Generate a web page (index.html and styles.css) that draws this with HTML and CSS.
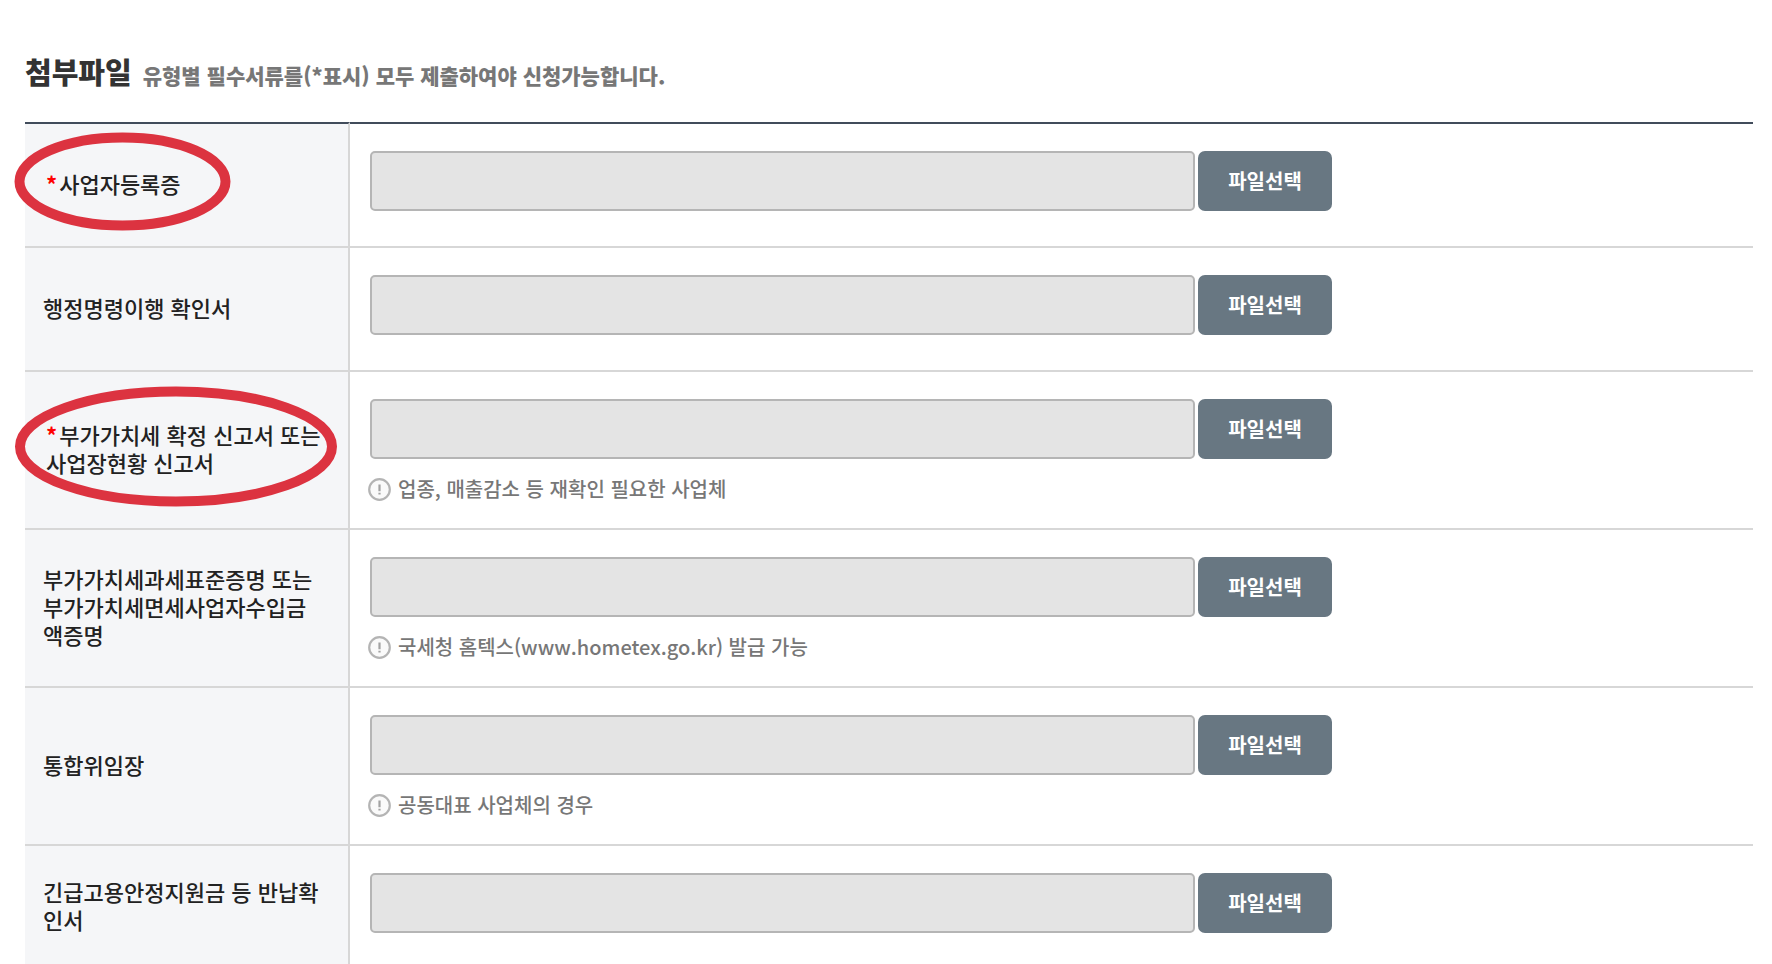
FILE: index.html
```html
<!DOCTYPE html>
<html lang="ko">
<head>
    <meta charset="UTF-8">
    <meta name="viewport" content="width=device-width, initial-scale=1.0">
    <title>첨부파일</title>
    <link rel="stylesheet" href="styles.css">
</head>
<body>

    <!-- 안내 아이콘 -->
    <svg class="sprite" aria-hidden="true">
        <symbol id="icon-info" viewBox="0 0 23 23">
            <circle cx="11.5" cy="11.5" r="10.3" fill="#fafafa" stroke="#b4b4b4" stroke-width="2.2"/>
            <path d="M11.5 6.5v6.8M11.5 14.8v1.8" fill="none" stroke="#a2a2a2" stroke-width="2.2"/>
        </symbol>
    </svg>

    <div class="container">
        <div class="title">
            <h1>첨부파일</h1>
            <p>유형별 필수서류를(*표시) 모두 제출하여야 신청가능합니다.</p>
        </div>

        <table class="file-table">
            <tbody>
                <tr>
                    <th scope="row">
                        <label class="required" for="file1"><span class="star">*</span>사업자등록증</label>
                        <svg class="mark mark-short" aria-hidden="true"><ellipse cx="50%" cy="50%" rx="103" ry="44"/></svg>
                    </th>
                    <td>
                        <div class="upload">
                            <input type="text" id="file1" readonly>
                            <button type="button">파일선택</button>
                        </div>
                    </td>
                </tr>
                <tr>
                    <th scope="row"><label for="file2">행정명령이행 확인서</label></th>
                    <td>
                        <div class="upload">
                            <input type="text" id="file2" readonly>
                            <button type="button">파일선택</button>
                        </div>
                    </td>
                </tr>
                <tr>
                    <th scope="row">
                        <label class="required" for="file3"><span class="star">*</span>부가가치세 확정 신고서 또는 사업장현황 신고서</label>
                        <svg class="mark mark-long" aria-hidden="true"><ellipse cx="50%" cy="50%" rx="156" ry="55"/></svg>
                    </th>
                    <td>
                        <div class="upload">
                            <input type="text" id="file3" readonly>
                            <button type="button">파일선택</button>
                        </div>
                        <p class="help"><svg aria-hidden="true"><use href="#icon-info"/></svg>업종, 매출감소 등 재확인 필요한 사업체</p>
                    </td>
                </tr>
                <tr>
                    <th scope="row"><label for="file4">부가가치세과세표준증명 또는 부가가치세면세사업자수입금액증명</label></th>
                    <td>
                        <div class="upload">
                            <input type="text" id="file4" readonly>
                            <button type="button">파일선택</button>
                        </div>
                        <p class="help"><svg aria-hidden="true"><use href="#icon-info"/></svg>국세청 홈텍스(www.hometex.go.kr) 발급 가능</p>
                    </td>
                </tr>
                <tr>
                    <th scope="row"><label for="file5">통합위임장</label></th>
                    <td>
                        <div class="upload">
                            <input type="text" id="file5" readonly>
                            <button type="button">파일선택</button>
                        </div>
                        <p class="help"><svg aria-hidden="true"><use href="#icon-info"/></svg>공동대표 사업체의 경우</p>
                    </td>
                </tr>
                <tr>
                    <th scope="row"><label for="file6">긴급고용안정지원금 등 반납확인서</label></th>
                    <td>
                        <div class="upload">
                            <input type="text" id="file6" readonly>
                            <button type="button">파일선택</button>
                        </div>
                    </td>
                </tr>
            </tbody>
        </table>
    </div>

</body>
</html>
```
FILE: styles.css
```css
* {
    box-sizing: border-box;
}
body {
    margin: 0;
    background-color: #fff;
    color: #222;
    font-family: "Noto Sans CJK KR", sans-serif;
}
.sprite {
    display: none;
}
.container {
    padding: 48px 19px 0 25px;
}
.title {
    display: flex;
    align-items: baseline;
    gap: 11px;
    height: 74px;
}
.title h1 {
    margin: 0;
    color: #333;
    font-size: 29px;
    font-weight: 900;
    line-height: 46px;
}
.title p {
    margin: 0;
    color: #777;
    font-size: 21px;
    font-weight: 900;
    line-height: 32px;
}
.file-table {
    width: 100%;
    border-collapse: separate;
    border-spacing: 0;
}
.file-table th,
.file-table td {
    border-bottom: 2px solid #d7d7d7;
}
.file-table tr:first-child th,
.file-table tr:first-child td {
    border-top: 2px solid #414c5b;
}
.file-table th {
    position: relative;
    width: 325px;
    padding: 0 22px 4px 18px;
    border-right: 2px solid #d7d7d7;
    background-color: #f5f6f8;
    font-size: 22px;
    font-weight: 500;
    line-height: 28px;
    text-align: left;
    vertical-align: middle;
    word-break: break-all;
}
.file-table td {
    padding: 27px 18px 35px;
    vertical-align: top;
}
label {
    display: block;
}
.required {
    padding-left: 3px;
    margin-right: -10px;
}
.star {
    margin-right: 2px;
    color: #f00;
    font-weight: 700;
}
/* 필수서류 강조 표시 */
.mark {
    position: absolute;
    left: -10px;
    overflow: visible;
    pointer-events: none;
}
.mark ellipse {
    fill: none;
    stroke: #dc3340;
    stroke-width: 10px;
}
.mark-short {
    top: 9px;
    width: 215px;
    height: 97px;
}
.mark-long {
    top: 15px;
    width: 322px;
    height: 119px;
}
.upload {
    display: flex;
    gap: 3px;
    padding-left: 2px;
}
.upload input {
    flex: 0 1 825px;
    min-width: 0;
    height: 60px;
    padding: 0 16px;
    border: 2px solid #b5b5b5;
    border-radius: 5px;
    background-color: #e4e4e4;
    font-family: inherit;
    font-size: 20px;
}
.upload button {
    flex: none;
    width: 134px;
    height: 60px;
    padding: 0 0 2px;
    border: none;
    border-radius: 7px;
    background-color: #687782;
    color: #fff;
    font-family: inherit;
    font-size: 20px;
    font-weight: 700;
    cursor: pointer;
}
.upload button:hover {
    background-color: #596772;
}
.help {
    display: flex;
    align-items: center;
    gap: 7px;
    margin: 16px 0 -10px;
    color: #777;
    font-size: 20px;
    font-weight: 500;
    line-height: 28px;
}
.help svg {
    flex: none;
    width: 23px;
    height: 23px;
}
```
